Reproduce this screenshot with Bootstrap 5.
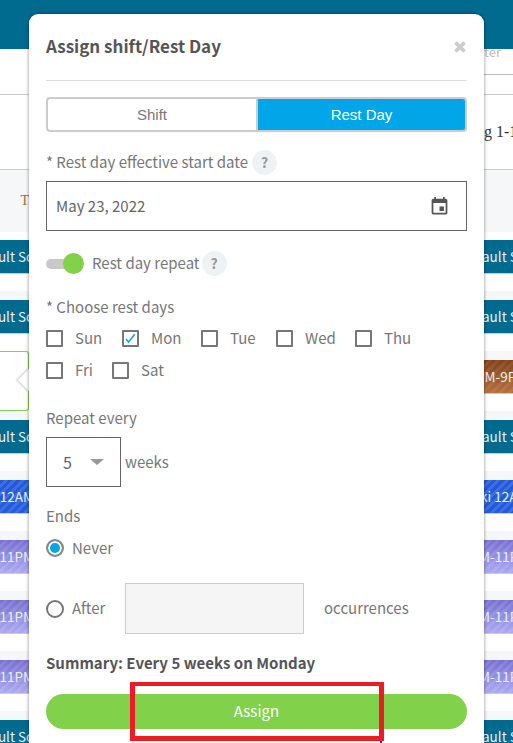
<!DOCTYPE html>
<html lang="en">
<head>
<meta charset="utf-8">
<title>Assign shift</title>
<link href="https://cdn.jsdelivr.net/npm/bootstrap@5.3.0/dist/css/bootstrap.min.css" rel="stylesheet">
<style>
html,body{height:743px;overflow:hidden;background:#fff;}
body{font-family:"Noto Sans CJK SC","Noto Sans","Liberation Sans",sans-serif;font-size:15px;color:#777;position:relative;}
.top-band{height:49px;background:#006a8f;}
.band-a{height:26px;}
.band-a2{height:20px;border-bottom:1px solid #ccc;}
.band-b{height:75px;border-bottom:1px solid #ccc;}
.band-c{height:62px;background:#f6f7f9;margin-bottom:8px;}
.side-l{width:29px;overflow:hidden;flex:none;}
.side-r{width:29px;overflow:hidden;flex:none;}
.side-line{border-bottom:1px solid #bbb;}
.far-text{font-size:13px;color:#bbb;line-height:16px;margin-top:-5px;}
.serif-text{font-family:"Liberation Serif",serif;font-size:16px;color:#334;white-space:nowrap;line-height:20px;}
.t-text{color:#a5701f;font-family:"Liberation Serif",serif;font-size:14px;line-height:18px;margin-right:0;}
.sched-row{height:60px;}
.chip{height:34px;display:flex;align-items:center;white-space:nowrap;color:#e8f0f4;font-size:13.5px;overflow:hidden;border-bottom:1px solid #ccc;}
.side-l .chip{justify-content:flex-end;}
.cut-l-teal{margin-right:-4px;}
.cut-l-blue{margin-right:-5px;}
.cut-l-purple{margin-right:-5px;}
.cut-r-teal{margin-left:-2px;}
.cut-r-brown{margin-left:-8px;}
.cut-r-blue{margin-left:-4px;}
.cut-r-purple{margin-left:-5px;}
.chip-teal{background:#006a8f;}
.chip-blue{background:repeating-linear-gradient(135deg,#2559d6 0 3px,#3a6fe6 3px 6px);}
.chip-purple{background:repeating-linear-gradient(135deg,rgba(255,255,255,0) 0 3px,rgba(255,255,255,.1) 3px 6px),linear-gradient(#7770d2,#acaaf0);}
.chip-brown{background:repeating-linear-gradient(135deg,rgba(255,255,255,0) 0 3px,rgba(255,255,255,.07) 3px 6px),linear-gradient(#84421a,#b4703f);}
.sched-gap{height:17px;}
.sched-tint{height:9px;background:#f6f7f9;}
.side-sel{margin-top:-9px;height:69px;}
.sel-box{height:60px;border:1px solid #8ccb55;border-left:0;border-radius:0 3px 3px 0;background:#fff;}

.pop-arrow{position:absolute;left:21px;top:372px;width:16px;height:16px;background:#fff;transform:rotate(45deg);box-shadow:-1px 1px 2px rgba(0,0,0,.22);}
.pop{position:absolute;left:29px;top:14px;width:455px;height:760px;background:#fff;border-radius:9px;box-shadow:0 0 3px 1px rgba(0,0,0,.28);padding:17px;}
.pop-head{height:50px;border-bottom:1px solid #ddd;display:flex;justify-content:space-between;}
.pop-title{font-size:17px;font-weight:700;color:#555;line-height:30px;}
.pop-close{width:14px;height:14px;margin-top:9px;}
.seg{display:flex;height:35px;margin-top:16px;}
.seg-btn{font-family:"Liberation Sans",sans-serif;font-size:15px;padding:0;line-height:31px;border:2px solid #ccc;}
.seg-off{width:210px;background:#fff;color:#777;border-radius:4px 0 0 4px;border-right:0;}
.seg-on{width:211px;background:#00a6e8;color:#fff;border-radius:0 4px 4px 0;border-color:#ccc;}
.seg-off:hover{background:#fff;color:#777;border-color:#ccc;}
.seg-on:hover{background:#00a6e8;color:#fff;border-color:#ccc;}
.line{line-height:24px;height:24px;}
.m7{margin-top:7px;}.m8{margin-top:8px;}.m17{margin-top:17px;}.m18{margin-top:18px;}.m20{margin-top:20px;}.m23{margin-top:23px;}.m24{margin-top:24px;}.m19{margin-top:19px;}
.qmark{display:inline-flex;width:25px;height:25px;border-radius:50%;background:#eff2f5;color:#999;font-weight:700;font-size:14px;align-items:center;justify-content:center;flex:none;}
.q-near{margin-left:2px;}
.date-box{height:50px;border:1px solid #666;display:flex;align-items:center;justify-content:space-between;padding:0 16px 0 9px;color:#666;}
.tog{position:relative;width:38px;height:21px;flex:none;}
.tog-track{position:absolute;left:0;top:6px;width:30px;height:10px;border-radius:5px;background:#c9c9c9;}
.tog-knob{position:absolute;left:17px;top:0;width:21px;height:21px;border-radius:50%;background:#82d14a;}
.day{display:flex;align-items:center;}
.day .form-check-input{width:17px;height:17px;margin:0 12px 0 0;border:2px solid #777;border-radius:1px;background-color:#fff;box-shadow:none;flex:none;}
.day .form-check-input:checked{background-color:#fff;border-color:#777;background-image:url("data:image/svg+xml,%3Csvg xmlns='http://www.w3.org/2000/svg' viewBox='0 0 17 17'%3E%3Cpath d='M2.5 9l3.5 4 8-10' fill='none' stroke='%2300a6e8' stroke-width='2'/%3E%3C/svg%3E");background-size:100%;}
.days-a{display:flex;}
.days-a .day:nth-child(1){width:76px;}
.days-a .day:nth-child(2){width:79px;}
.days-a .day:nth-child(3){width:75px;}
.days-a .day:nth-child(4){width:79px;}
.days-b{display:flex;}
.days-b .day:nth-child(1){width:66px;}
.sel-row{display:flex;align-items:center;height:50px;}
.num-box{width:75px;height:50px;border:1px solid #666;display:flex;align-items:center;padding-left:16px;color:#567;font-size:16px;}
.num-caret{width:0;height:0;border-left:7px solid transparent;border-right:7px solid transparent;border-top:6px solid #999;margin-left:18px;}
.rad{display:flex;align-items:center;}
.rad .form-check-input{width:18px;height:18px;margin:0 8px 0 0;border:2px solid #777;background-color:#fff;box-shadow:none;flex:none;}
.rad .form-check-input:checked{background-image:none;background-color:#00a6e8;border-color:#888;box-shadow:inset 0 0 0 2px #fff;}
.after-row{display:flex;align-items:center;height:51px;}
.after-lab{width:79px;}
.after-box{width:179px;height:51px;border:1px solid #ccc;background:#f5f5f5;margin-right:20px;}
.summary{font-weight:700;color:#555;line-height:24px;height:24px;}
.assign-btn{display:block;width:100%;height:35px;border-radius:18px;border:0;background:#82d14a;color:#fff;font-size:15px;padding:0;}
.assign-btn:hover{background:#82d14a;color:#fff;}
.red-mark{position:absolute;left:130px;top:682px;width:254px;height:59px;border:5px solid #ed1c24;border-top-width:4px;pointer-events:none;}
.red-mark::after{content:"";position:absolute;right:-3px;bottom:-7px;width:2px;height:2px;background:#2233dd;}
</style>
</head>
<body>
<div class="top-band"></div>
<div class="d-flex justify-content-between band-a"><div class="side-l"></div><div class="side-r side-line"><div class="far-text">ter</div></div></div>
<div class="band-a2"></div>
<div class="d-flex justify-content-between align-items-center band-b"><div class="side-l"></div><div class="side-r serif-text">g 1-10</div></div>
<div class="d-flex justify-content-between band-c align-items-center"><div class="side-l text-end t-text">T</div><div class="side-r"></div></div>

<div class="d-flex justify-content-between sched-row"><div class="side-l"><div class="chip chip-teal"><span class="cut-l-teal">Default Sc</span></div><div class="sched-gap"></div><div class="sched-tint"></div></div><div class="side-r"><div class="chip chip-teal"><span class="cut-r-teal">ault Sche</span></div><div class="sched-gap"></div><div class="sched-tint"></div></div></div>
<div class="d-flex justify-content-between sched-row"><div class="side-l"><div class="chip chip-teal"><span class="cut-l-teal">Default Sc</span></div><div class="sched-gap"></div><div class="sched-tint"></div></div><div class="side-r"><div class="chip chip-teal"><span class="cut-r-teal">ault Sche</span></div><div class="sched-gap"></div><div class="sched-tint"></div></div></div>
<div class="d-flex justify-content-between sched-row"><div class="side-l side-sel"><div class="sel-box"></div><div class="sched-tint"></div></div><div class="side-r"><div class="chip chip-brown"><span class="cut-r-brown">PM-9PM</span></div><div class="sched-gap"></div><div class="sched-tint"></div></div></div>
<div class="d-flex justify-content-between sched-row"><div class="side-l"><div class="chip chip-teal"><span class="cut-l-teal">Default Sc</span></div><div class="sched-gap"></div><div class="sched-tint"></div></div><div class="side-r"><div class="chip chip-teal"><span class="cut-r-teal">ault Sche</span></div><div class="sched-gap"></div><div class="sched-tint"></div></div></div>
<div class="d-flex justify-content-between sched-row"><div class="side-l"><div class="chip chip-blue"><span class="cut-l-blue">i 12AM</span></div><div class="sched-gap"></div><div class="sched-tint"></div></div><div class="side-r"><div class="chip chip-blue"><span class="cut-r-blue">ki 12AM</span></div><div class="sched-gap"></div><div class="sched-tint"></div></div></div>
<div class="d-flex justify-content-between sched-row"><div class="side-l"><div class="chip chip-purple"><span class="cut-l-purple">PM-11PM</span></div><div class="sched-gap"></div><div class="sched-tint"></div></div><div class="side-r"><div class="chip chip-purple"><span class="cut-r-purple">M-11PM</span></div><div class="sched-gap"></div><div class="sched-tint"></div></div></div>
<div class="d-flex justify-content-between sched-row"><div class="side-l"><div class="chip chip-purple"><span class="cut-l-purple">PM-11PM</span></div><div class="sched-gap"></div><div class="sched-tint"></div></div><div class="side-r"><div class="chip chip-purple"><span class="cut-r-purple">M-11PM</span></div><div class="sched-gap"></div><div class="sched-tint"></div></div></div>
<div class="d-flex justify-content-between sched-row"><div class="side-l"><div class="chip chip-purple"><span class="cut-l-purple">PM-11PM</span></div><div class="sched-gap"></div><div class="sched-tint"></div></div><div class="side-r"><div class="chip chip-purple"><span class="cut-r-purple">M-11PM</span></div><div class="sched-gap"></div><div class="sched-tint"></div></div></div>
<div class="d-flex justify-content-between sched-row"><div class="side-l"><div class="chip chip-teal"><span class="cut-l-teal">Default Sc</span></div></div><div class="side-r"><div class="chip chip-teal"><span class="cut-r-teal">ault Sche</span></div></div></div>

<div class="pop-arrow"></div>
<div class="pop">
  <div class="pop-head">
    <div class="pop-title">Assign shift/Rest Day</div>
    <svg class="pop-close" viewBox="0 0 14 14" aria-hidden="true"><path d="M2.5 2.5l9 9M11.5 2.5l-9 9" stroke="#ccc" stroke-width="3.6" fill="none"/></svg>
  </div>
  <div class="seg">
    <button type="button" class="btn seg-btn seg-off">Shift</button>
    <button type="button" class="btn seg-btn seg-on">Rest Day</button>
  </div>
  <div class="line m18 d-flex align-items-center gap-1">* Rest day effective start date <span class="qmark">?</span></div>
  <div class="date-box m7">
    <span>May 23, 2022</span>
    <svg width="21" height="21" viewBox="0 0 24 24" aria-hidden="true"><path fill="#555" d="M17 12h-5v5h5v-5zM16 1v2H8V1H6v2H5c-1.11 0-1.99.9-1.99 2L3 19c0 1.1.89 2 2 2h14c1.1 0 2-.9 2-2V5c0-1.1-.9-2-2-2h-1V1h-2zm3 18H5V8h14v11z"/></svg>
  </div>
  <div class="line m20 d-flex align-items-center"><span class="tog me-2"><span class="tog-track"></span><span class="tog-knob"></span></span>Rest day repeat<span class="qmark q-near">?</span></div>
  <div class="line m20">* Choose rest days</div>
  <div class="line m7 days-a">
    <label class="day"><input class="form-check-input" type="checkbox">Sun</label>
    <label class="day"><input class="form-check-input" type="checkbox" checked>Mon</label>
    <label class="day"><input class="form-check-input" type="checkbox">Tue</label>
    <label class="day"><input class="form-check-input" type="checkbox">Wed</label>
    <label class="day"><input class="form-check-input" type="checkbox">Thu</label>
  </div>
  <div class="line m8 days-b">
    <label class="day"><input class="form-check-input" type="checkbox">Fri</label>
    <label class="day"><input class="form-check-input" type="checkbox">Sat</label>
  </div>
  <div class="line m24">Repeat every</div>
  <div class="sel-row m7">
    <div class="num-box">5<span class="num-caret"></span></div>
    <span class="ms-1">weeks</span>
  </div>
  <div class="line m17">Ends</div>
  <label class="rad line m8"><input class="form-check-input" type="radio" name="ends" checked>Never</label>
  <div class="after-row m23">
    <label class="rad after-lab"><input class="form-check-input" type="radio" name="ends">After</label>
    <div class="after-box"></div>
    <span>occurrences</span>
  </div>
  <div class="summary m17">Summary: Every 5 weeks on Monday</div>
  <button type="button" class="btn assign-btn m19">Assign</button>
</div>
<div class="red-mark"></div>
</body>
</html>
